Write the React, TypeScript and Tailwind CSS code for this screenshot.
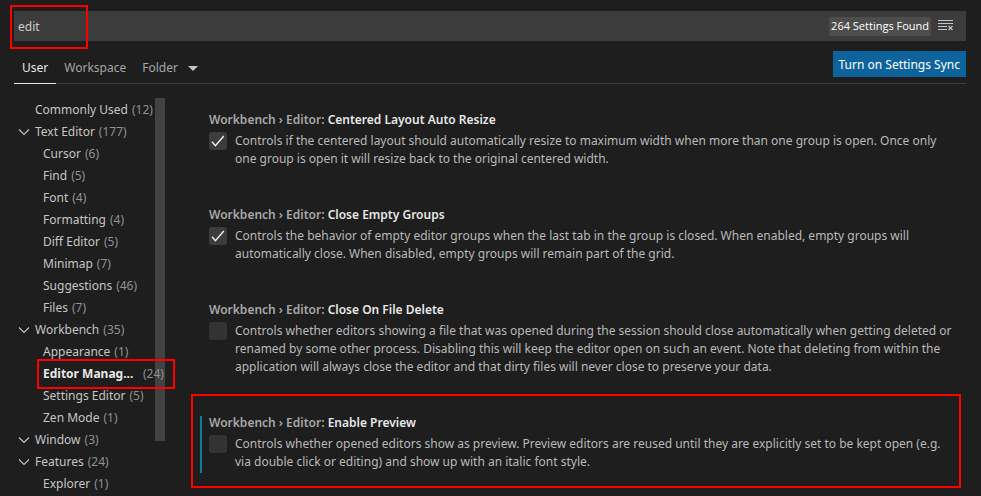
import { useState } from "react";

type TocEntry = { label: string; count: number; level: 0 | 1; open?: boolean; active?: boolean };

const toc: TocEntry[] = [
  { label: "Commonly Used", count: 12, level: 0 },
  { label: "Text Editor", count: 177, level: 0, open: true },
  { label: "Cursor", count: 6, level: 1 },
  { label: "Find", count: 5, level: 1 },
  { label: "Font", count: 4, level: 1 },
  { label: "Formatting", count: 4, level: 1 },
  { label: "Diff Editor", count: 5, level: 1 },
  { label: "Minimap", count: 7, level: 1 },
  { label: "Suggestions", count: 46, level: 1 },
  { label: "Files", count: 7, level: 1 },
  { label: "Workbench", count: 35, level: 0, open: true },
  { label: "Appearance", count: 1, level: 1 },
  { label: "Editor Manag...", count: 24, level: 1, active: true },
  { label: "Settings Editor", count: 5, level: 1 },
  { label: "Zen Mode", count: 1, level: 1 },
  { label: "Window", count: 3, level: 0, open: true },
  { label: "Features", count: 24, level: 0, open: true },
  { label: "Explorer", count: 1, level: 1 },
];

type Setting = { id: string; name: string; lines: string[]; checked: boolean; modified?: boolean };

const settings: Setting[] = [
  {
    id: "centered-layout",
    name: "Centered Layout Auto Resize",
    checked: true,
    lines: [
      "Controls if the centered layout should automatically resize to maximum width when more than one group is open. Once only",
      "one group is open it will resize back to the original centered width.",
    ],
  },
  {
    id: "close-empty",
    name: "Close Empty Groups",
    checked: true,
    lines: [
      "Controls the behavior of empty editor groups when the last tab in the group is closed. When enabled, empty groups will",
      "automatically close. When disabled, empty groups will remain part of the grid.",
    ],
  },
  {
    id: "close-on-delete",
    name: "Close On File Delete",
    checked: false,
    lines: [
      "Controls whether editors showing a file that was opened during the session should close automatically when getting deleted or",
      "renamed by some other process. Disabling this will keep the editor open on such an event. Note that deleting from within the",
      "application will always close the editor and that dirty files will never close to preserve your data.",
    ],
  },
  {
    id: "enable-preview",
    name: "Enable Preview",
    checked: false,
    modified: true,
    lines: [
      "Controls whether opened editors show as preview. Preview editors are reused until they are explicitly set to be kept open (e.g.",
      "via double click or editing) and show up with an italic font style.",
    ],
  },
];

function Chevron() {
  return (
    <svg className="h-4 w-4" viewBox="0 0 16 16" fill="none" stroke="#c5c5c5" strokeWidth="1.1" aria-hidden="true">
      <path d="M3 5.5 8 10.5 13 5.5" />
    </svg>
  );
}

function ClearIcon() {
  return (
    <svg className="h-4 w-4" viewBox="0 0 16 16" fill="none" stroke="#c5c5c5" shapeRendering="crispEdges" aria-hidden="true">
      <path d="M0 2.5H15M0 5.5H15M0 8.5H9M0 11.5H9" />
      <path d="M10.5 8 14.5 12M14.5 8 10.5 12" strokeWidth="1.2" shapeRendering="auto" />
    </svg>
  );
}

function TocRow({ entry }: { entry: TocEntry }) {
  return (
    <li className={`relative flex h-[22px] items-center ${entry.level === 1 ? "pl-[29px]" : "pl-[21px]"}`}>
      {entry.open && (
        <span className="absolute left-[2px] top-[3px]">
          <Chevron />
        </span>
      )}
      <a
        href="#"
        className={`whitespace-nowrap ${entry.active ? "w-24 font-bold text-[#e7e7e7]" : "text-[#c5c5c5]"}`}
      >
        {entry.label}
      </a>
      <span className="ml-1 text-[#919191]">({entry.count})</span>
      {entry.active && (
        <span className="pointer-events-none absolute -right-[10px] -top-1 left-[23px] h-[30px] border-2 border-[#ff0000]" />
      )}
    </li>
  );
}

function SettingItem({ setting }: { setting: Setting }) {
  const [on, setOn] = useState(setting.checked);
  return (
    <section className="relative pb-[37px] pl-[18px]">
      {setting.modified && (
        <>
          <span className="absolute bottom-[35px] left-[9px] top-[3px] w-[2px] bg-[#0c7d9d]" />
          <span className="pointer-events-none absolute -top-[19px] bottom-[20px] left-0 right-[5px] border-2 border-[#ff0000]" />
        </>
      )}
      <h2 className="whitespace-nowrap font-semibold leading-5 text-[#a8a8a8]">
        Workbench › Editor: <span className="text-[#e7e7e7]">{setting.name}</span>
      </h2>
      <div className="mt-[2px] flex gap-2">
        <span className="relative h-[18px] w-[18px] shrink-0">
          <input
            id={setting.id}
            type="checkbox"
            checked={on}
            onChange={(e) => setOn(e.target.checked)}
            className="block h-[18px] w-[18px] appearance-none rounded-[3px] bg-[#3c3c3c] not-checked:bg-[#333333]"
          />
          {on && (
            <svg className="pointer-events-none absolute inset-0 h-[18px] w-[18px]" viewBox="0 0 18 18" fill="none" stroke="#f0f0f0" strokeWidth="1.4" aria-hidden="true">
              <path d="M3 9.8 6.4 13.6 14.8 4" />
            </svg>
          )}
        </span>
        <label htmlFor={setting.id} className="leading-[18px] text-[#b9b9b9]">
          {setting.lines.map((line) => (
            <span key={line} className="block whitespace-nowrap">
              {line}
            </span>
          ))}
        </label>
      </div>
    </section>
  );
}

export default function App() {
  const [query, setQuery] = useState("edit");
  return (
    <div className="flex h-screen flex-col overflow-hidden bg-[#1e1e1e] pl-[14px] pr-[15px] pt-[11px] font-['Noto_Sans','Open_Sans',sans-serif] text-[12px] text-[#cccccc]">
      <div className="relative flex h-[30px] shrink-0 items-center bg-[#3c3c3c] pr-3">
        <input
          aria-label="Search settings"
          value={query}
          onChange={(e) => setQuery(e.target.value)}
          className="h-full min-w-0 flex-1 bg-transparent px-1 text-[#cccccc] outline-none"
        />
        <span className="flex h-[19px] items-center rounded-[2px] bg-[#4d4d4d] px-[2px] font-['Open_Sans','Noto_Sans',sans-serif] text-[11px] text-white">
          264 Settings Found
        </span>
        <button type="button" aria-label="Clear search" className="ml-[7px]">
          <ClearIcon />
        </button>
        <span className="pointer-events-none absolute -left-1 -top-[6px] h-11 w-[78px] border-2 border-[#ff0000]" />
      </div>

      <header className="flex h-[43px] shrink-0 items-end border-b border-[#3c3c3c]">
        <nav className="-mb-px flex h-8">
          <button type="button" className="border-b border-[#e7e7e7] px-2 text-[#e7e7e7]">
            User
          </button>
          <button type="button" className="px-2 text-[#a5a5a5]">
            Workspace
          </button>
          <button type="button" className="flex items-center gap-[10px] px-2 text-[#a5a5a5]">
            Folder
            <svg className="h-[5px] w-[10px]" viewBox="0 0 10 5" fill="#c5c5c5" aria-hidden="true">
              <path d="M0 0H10L5 5Z" />
            </svg>
          </button>
        </nav>
        <button type="button" className="mb-[6px] ml-auto h-[26px] bg-[#0e639c] px-[6px] pt-[2px] text-white">
          Turn on Settings Sync
        </button>
      </header>

      <div className="flex min-h-0 flex-1 pt-[14px]">
        <aside className="relative w-[151px] shrink-0">
          <div className="absolute right-0 top-0 h-[343px] w-[10px] bg-[#424242]" />
          <ul className="relative pt-px">
            {toc.map((entry) => (
              <TocRow key={entry.label} entry={entry} />
            ))}
          </ul>
        </aside>
        <main className="ml-[26px] min-w-0 flex-1 pt-3">
          {settings.map((setting) => (
            <SettingItem key={setting.id} setting={setting} />
          ))}
        </main>
      </div>
    </div>
  );
}
